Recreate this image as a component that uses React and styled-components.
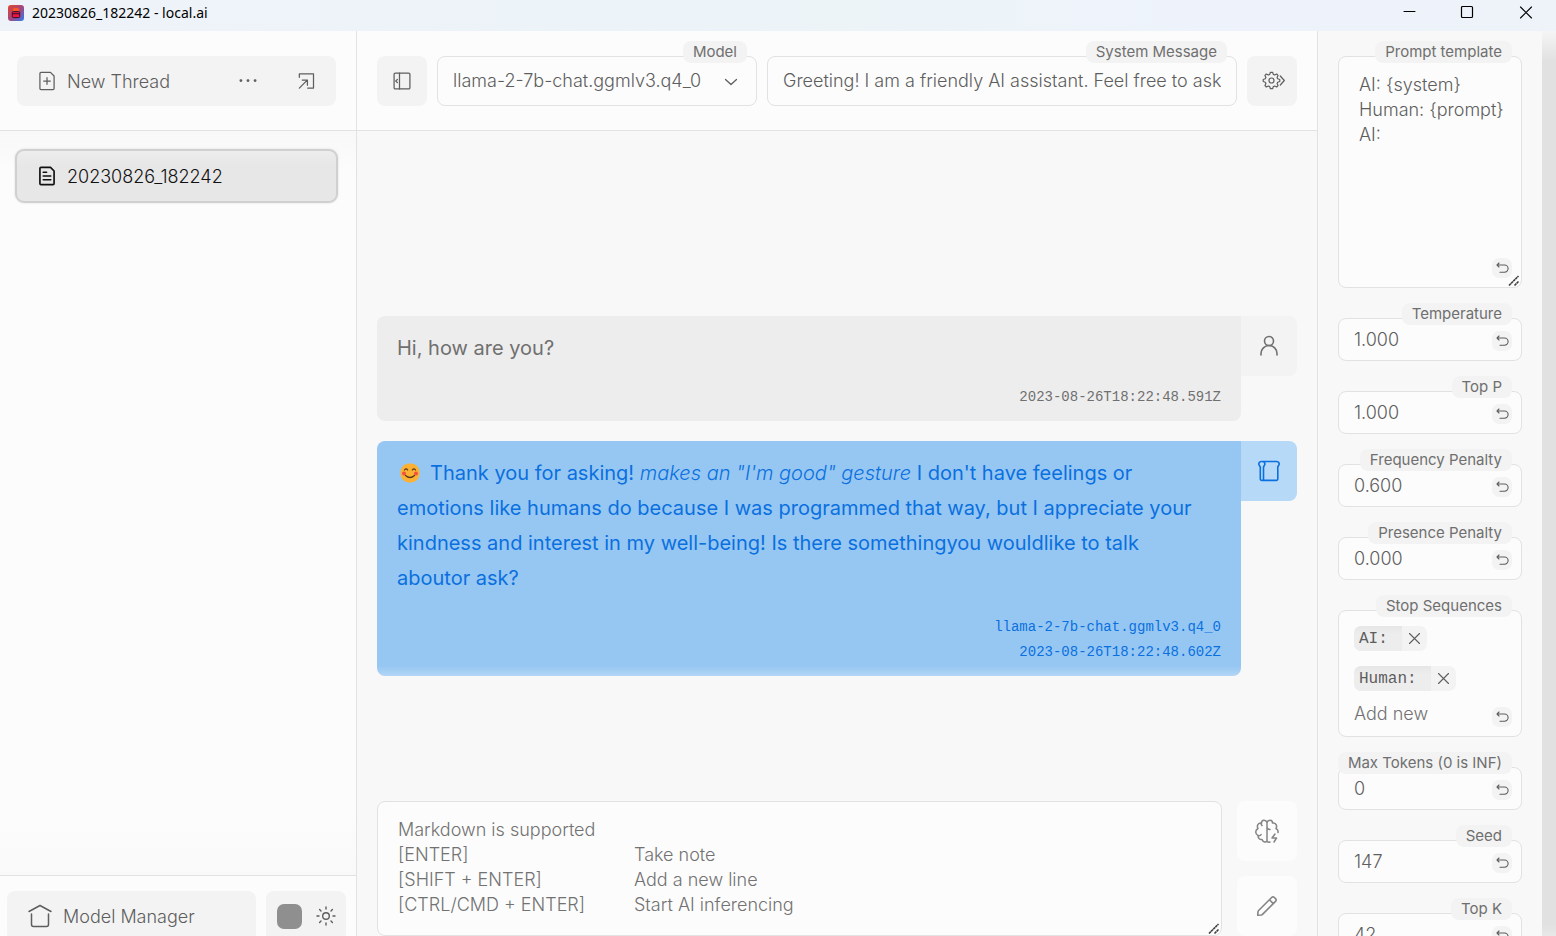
import React from "react";
import styled, { createGlobalStyle, css } from "styled-components";

const Global = createGlobalStyle`
  *, *::before, *::after { box-sizing: border-box; }
  html, body, #root { height: 100%; }
  body {
    margin: 0;
    overflow: hidden;
    font-family: Inter, "Liberation Sans", sans-serif;
    font-size: 18px;
    font-weight: 300;
    line-height: 25px;
    color: #5e5e5e;
    background: #f8f8f8;
  }
  button, input, textarea, select { font: inherit; color: inherit; margin: 0; }
  button { border: 0; padding: 0; cursor: pointer; }
`;

const line = "#e2e2e2";
const mono = `"Liberation Mono", monospace`;

const Window = styled.div`
  display: flex;
  flex-direction: column;
  height: 100vh;
`;

const TitleBar = styled.header`
  display: flex;
  align-items: center;
  flex: none;
  height: 31px;
  padding: 0 22px 6px 8px;
  gap: 8px;
  background: linear-gradient(90deg, #eef3fa, #ecf4f8 55%, #eef3fb 80%, #edf3f9);
  color: #000;
`;

const WindowTitle = styled.h1`
  flex: 1;
  margin: 0;
  font: 400 14px/20px "Noto Sans", "Open Sans", sans-serif;
`;

const WindowControls = styled.div`
  display: flex;
  gap: 42px;
`;

const WindowButton = styled.button`
  display: flex;
  width: 16px;
  height: 16px;
  background: none;
`;

const Body = styled.div`
  display: grid;
  grid-template-columns: 357px minmax(0, 1fr) 239px;
  flex: 1;
  min-height: 0;
`;

const Sidebar = styled.aside`
  display: flex;
  flex-direction: column;
  min-height: 0;
  border-right: 1px solid ${line};
  background: #fcfcfc;
`;

const SidebarHeader = styled.div`
  flex: none;
  height: 100px;
  padding: 25px 20px 0 17px;
  border-bottom: 1px solid ${line};
`;

const NewThreadBar = styled.div`
  display: flex;
  align-items: center;
  height: 50px;
  padding-right: 20px;
  border-radius: 8px;
  background: #f3f3f3;
`;

const ToolButton = styled.button`
  display: flex;
  align-items: center;
  justify-content: center;
  gap: 10px;
  height: 50px;
  background: none;
  ${(p) => p.$wide && css`
    flex: 1;
    justify-content: flex-start;
    padding-left: 20px;
  `}
`;

const BarActions = styled.div`
  display: flex;
  gap: 38px;
`;

const ThreadList = styled.nav`
  flex: 1;
  padding: 18px 18px 0 15px;
  background: linear-gradient(#f8f8f8, #fcfcfc 40px, #fcfcfc calc(100% - 60px), #f9f9f9);
`;

const ThreadLink = styled.a`
  display: flex;
  align-items: center;
  gap: 10px;
  height: 54px;
  padding-left: 20px;
  border: 2px solid #d0d0d0;
  border-radius: 9px;
  background: linear-gradient(#ededed, #e7e7e7 14px);
  box-shadow: 0 0 2px #d4d4d4;
  color: #111;
  text-decoration: none;
`;

const SidebarFooter = styled.div`
  display: flex;
  flex: none;
  gap: 10px;
  height: 61px;
  padding: 15px 10px 0 7px;
  border-top: 1px solid ${line};
`;

const FooterButton = styled.button`
  display: flex;
  align-items: center;
  gap: ${(p) => (p.$grow ? "10px" : "13px")};
  height: 50px;
  flex: ${(p) => (p.$grow ? "1" : "0 0 80px")};
  padding-left: ${(p) => (p.$grow ? "20px" : "11px")};
  border-radius: 8px;
  background: #f3f3f3;
`;

const Swatch = styled.span`
  width: 25px;
  height: 25px;
  border-radius: 7px;
  background: #8f8f8f;
`;

const Main = styled.main`
  display: flex;
  flex-direction: column;
  min-width: 0;
  min-height: 0;
`;

const Toolbar = styled.div`
  display: flex;
  flex: none;
  gap: 10px;
  height: 100px;
  padding: 25px 20px 0;
  border-bottom: 1px solid ${line};
  background: #fcfcfc;
`;

const SquareButton = styled.button`
  display: flex;
  align-items: center;
  justify-content: center;
  flex: 0 0 50px;
  height: 50px;
  border-radius: 8px;
  background: #f3f3f3;
`;

const Field = styled.div`
  position: relative;
  display: flex;
  min-width: 0;
  flex: ${(p) => p.$flex || "none"};
`;

const FieldLabel = styled.label`
  position: absolute;
  top: -15px;
  right: 10px;
  padding: 0 10px;
  border-radius: 8px;
  background: #f3f3f3;
  font-size: 15px;
  font-weight: 400;
  line-height: 22px;
  color: #6f6f6f;
  white-space: nowrap;
`;

const control = css`
  width: 100%;
  min-width: 0;
  border: 1px solid ${line};
  border-radius: 8px;
  outline: none;
  background: #fcfcfc;
  padding: 0 15px;
`;

const Select = styled.select`
  ${control}
  height: 50px;
  padding-bottom: 2px;
  appearance: none;
`;

const SelectArrow = styled.span`
  position: absolute;
  right: 18px;
  top: 18px;
  display: flex;
  pointer-events: none;
`;

const Input = styled.input`
  ${control}
  height: ${(p) => (p.$large ? "50px" : "43px")};
  padding-bottom: ${(p) => (p.$large ? "2px" : "0")};
`;

const TextArea = styled.textarea`
  ${control}
  display: block;
  height: 232px;
  padding: 15px 10px 15px 20px;
  resize: none;
`;

const Chat = styled.section`
  display: flex;
  flex-direction: column;
  justify-content: flex-end;
  flex: 1;
  gap: 20px;
  min-height: 0;
  padding: 0 20px 125px;
`;

const Message = styled.article`
  display: flex;
  align-items: flex-start;
  color: ${(p) => (p.$bot ? "#0a70df" : "#707070")};
`;

const Bubble = styled.div`
  display: flex;
  flex-direction: column;
  gap: 19px;
  flex: 1;
  min-width: 0;
  padding: 15px 20px 11px;
  border-radius: 8px 0 8px 8px;
  background: ${(p) => (p.$bot ? "linear-gradient(#96c7f2 calc(100% - 10px), #b3d6f6)" : "#ededed")};
`;

const MessageText = styled.p`
  margin: 0;
  padding-right: 15px;
  font-size: 20px;
  font-weight: 400;
  line-height: 35px;
  em { font-weight: 300; }
`;

const Meta = styled.footer`
  display: flex;
  flex-direction: column;
  align-items: flex-end;
  font: 14px/25px ${mono};
`;

const Avatar = styled.div`
  display: flex;
  align-items: center;
  justify-content: center;
  width: 56px;
  height: 60px;
  border-radius: 0 8px 8px 0;
  background: ${(p) => (p.$bot ? "#b7d9f8" : "#f3f3f3")};
`;

const Emoji = styled.svg`
  margin: 0 10px 0 3px;
  vertical-align: -3px;
`;

const Composer = styled.form`
  display: flex;
  flex: none;
  gap: 15px;
  padding: 0 20px;
`;

const Prompt = styled.div`
  position: relative;
  flex: 1;
  display: flex;
`;

const PromptInput = styled.textarea`
  ${control}
  height: 135px;
  resize: none;
`;

const PromptHints = styled.dl`
  position: absolute;
  inset: 16px 20px auto 21px;
  display: grid;
  grid-template-columns: 236px 1fr;
  margin: 0;
  color: #727272;
  pointer-events: none;
  dt, dd { margin: 0; }
  dt:first-child { grid-column: 1 / -1; }
`;

const ComposerActions = styled.div`
  display: flex;
  flex-direction: column;
  gap: 15px;
`;

const ComposerButton = styled.button`
  display: flex;
  align-items: center;
  justify-content: center;
  width: 60px;
  height: 60px;
  border-radius: 8px;
  background: #fcfcfc;
  color: #858585;
`;

const Settings = styled.aside`
  display: flex;
  min-height: 0;
  border-left: 1px solid ${line};
  background: #f8f8f8;
`;

const SettingsList = styled.div`
  display: flex;
  flex-direction: column;
  gap: 30px;
  flex: 1;
  min-width: 0;
  padding: 25px 20px;
  overflow: hidden;
`;

const ScrollTrack = styled.div`
  width: 14px;
  background: linear-gradient(#f5f5f5, #e1e1e1 30px, #e1e1e1 calc(100% - 12px), #e8e8e8);
`;

const ResetButton = styled.button`
  position: absolute;
  right: 10px;
  bottom: 10px;
  display: flex;
  align-items: center;
  justify-content: center;
  width: 20px;
  height: 20px;
  border-radius: 7px;
  background: #f3f3f3;
`;

const Grip = styled.svg`
  position: absolute;
  right: 2px;
  bottom: 1px;
  color: #404040;
  pointer-events: none;
`;

const StopBox = styled.div`
  ${control}
  display: flex;
  flex-direction: column;
  align-items: flex-start;
  gap: 15px;
  height: 127px;
  padding-top: 15px;
`;

const Tag = styled.span`
  display: flex;
  height: 25px;
  overflow: hidden;
  border-radius: 7px;
  background: #f3f3f3;
  font: 16px/27px ${mono};
`;

const TagText = styled.span`
  padding: 0 5px;
  background: linear-gradient(#e6e6e6, #ededed 8px);
  white-space: pre;
`;

const TagRemove = styled.button`
  display: flex;
  align-items: center;
  justify-content: center;
  width: 25px;
  background: none;
`;

const AddInput = styled.input`
  width: 120px;
  height: 25px;
  margin-top: -5px;
  padding: 0;
  border: 0;
  outline: none;
  background: none;
  &::placeholder { color: #727272; opacity: 1; }
`;

const Icon = ({ size = 20, box = 24, w = 1.5, children }) => (
  <svg width={size} height={size} viewBox={`0 0 ${box} ${box}`} fill="none" stroke="currentColor"
    strokeWidth={w} strokeLinecap="round" strokeLinejoin="round" aria-hidden="true">
    {children}
  </svg>
);

const page = "M3.5 21V3a1.300 1.300 0 0 1 1.300-1.300h11.400l4.300 4.300v15a1.300 1.300 0 0 1-1.300 1.300H4.800A1.300 1.300 0 0 1 3.500 21Z";

const ResizeGrip = () => (
  <Grip width="12" height="12" viewBox="0 0 12 12" stroke="currentColor" strokeWidth="1.6" aria-hidden="true">
    <path d="M1 10.500 10.500 1M6.500 10.500l4-4" strokeDasharray="2.600 0.400" />
  </Grip>
);

const Reset = ({ name }) => (
  <ResetButton type="button" aria-label={`Reset ${name}`}>
    <Icon size={14} box={14} w={1.1}>
      <path d="M2 4h7.500a3.600 3.600 0 0 1 0 7.200H5M4 2 2 4l2 2" />
    </Icon>
  </ResetButton>
);

const NumberSetting = ({ id, label, value }) => (
  <Field>
    <Input id={id} defaultValue={value} />
    <FieldLabel htmlFor={id}>{label}</FieldLabel>
    <Reset name={label} />
  </Field>
);

const StopTag = ({ text }) => (
  <Tag>
    <TagText>{text + " "}</TagText>
    <TagRemove type="button" aria-label={`Remove ${text}`}>
      <Icon size={13} box={13} w={1.1}><path d="m1.500 1.500 10 10m0-10-10 10" /></Icon>
    </TagRemove>
  </Tag>
);

const AppLogo = () => (
  <svg width="16" height="16" viewBox="0 0 16 16" aria-hidden="true">
    <defs>
      <linearGradient id="logo" x1="0" y1="0" x2="1" y2="1">
        <stop offset="0" stopColor="#e2472c" />
        <stop offset=".5" stopColor="#a8467c" />
        <stop offset="1" stopColor="#2d7bf5" />
      </linearGradient>
    </defs>
    <rect width="16" height="16" rx="3" fill="url(#logo)" />
    <path d="M5 6.500V4.500Q5 3 6.500 3h3Q11 3 11 4.500v2z" fill="#ff5a1e" />
    <rect x="4.300" y="6.600" width="7.400" height="6" rx="1" fill="#f3123f" stroke="#35102c" strokeWidth="1" />
    <path d="M4.300 8.700h7.400" stroke="#35102c" strokeWidth="1" />
  </svg>
);

const Smile = () => (
  <Emoji width="20" height="20" viewBox="0 0 20 20" role="img" aria-label="Smiling face">
    <rect x=".5" y=".5" width="19" height="19" rx="8.500" fill="#fcb132" />
    <circle cx="4" cy="10.500" r="2" fill="#f6503c" />
    <circle cx="16" cy="10.500" r="2" fill="#f6503c" />
    <path d="M4.500 7q1.600-2.400 3.200 0M12.300 7q1.600-2.400 3.200 0M5.500 12.500q4.500 4 9 0" fill="none" stroke="#5b3a1c"
      strokeWidth="1.200" strokeLinecap="round" />
  </Emoji>
);

export default function App() {
  return (
    <Window>
      <Global />
      <TitleBar>
        <AppLogo />
        <WindowTitle>20230826_182242 - local.ai</WindowTitle>
        <WindowControls>
          <WindowButton aria-label="Minimize">
            <Icon size={16} box={16} w={1}><path d="M2 6.500h11" /></Icon>
          </WindowButton>
          <WindowButton aria-label="Maximize">
            <Icon size={16} box={16} w={1.2}><rect x="1.500" y="1.500" width="11" height="11" rx="1" /></Icon>
          </WindowButton>
          <WindowButton aria-label="Close">
            <Icon size={16} box={16} w={1.1}><path d="m2.500 2 11 11m0-11-11 11" /></Icon>
          </WindowButton>
        </WindowControls>
      </TitleBar>

      <Body>
        <Sidebar>
          <SidebarHeader>
            <NewThreadBar>
              <ToolButton $wide>
                <Icon><path d={page} /><path d="M8 12h8M12 8v8" /></Icon>
                New Thread
              </ToolButton>
              <BarActions>
                <ToolButton aria-label="More">
                  <Icon><g fill="currentColor"><circle cx="3.500" cy="11.500" r="1" /><circle cx="12" cy="11.500" r="1" /><circle cx="20.500" cy="11.500" r="1" /></g></Icon>
                </ToolButton>
                <ToolButton aria-label="Open folder">
                  <Icon><path d="M4 7.500V3.500h17v17h-7M4 20.500l9.500-9.500M7.500 10.800h6.200V17" /></Icon>
                </ToolButton>
              </BarActions>
            </NewThreadBar>
          </SidebarHeader>
          <ThreadList aria-label="Threads">
            <ThreadLink href="#thread">
              <Icon w={2}><path d={page} /><path d="M7.500 7.500h4M7.500 12h9M7.500 16.500h9" /></Icon>
              20230826_182242
            </ThreadLink>
          </ThreadList>
          <SidebarFooter>
            <FooterButton $grow>
              <Icon size={26} box={26} w={1.5}>
                <path d="M2 8.500 13 2.500l11 6M4.500 11v10.500a2 2 0 0 0 2 2h13a2 2 0 0 0 2-2V11" />
              </Icon>
              Model Manager
            </FooterButton>
            <FooterButton aria-label="Theme">
              <Swatch />
              <Icon size={22} box={22} w={1.4}>
                <circle cx="11" cy="11" r="3.300" />
                <path d="M11 2v2M11 18v2M2 11h2M18 11h2M4.600 4.600 6 6M16 16l1.400 1.400M4.600 17.400 6 16M16 6l1.400-1.400" />
              </Icon>
            </FooterButton>
          </SidebarFooter>
        </Sidebar>

        <Main>
          <Toolbar>
            <SquareButton aria-label="Toggle sidebar">
              <Icon>
                <rect x="2.500" y="2.500" width="19" height="19" rx="1.500" />
                <path d="M9 2.500v19M6.500 10l-2 2 2 2" />
              </Icon>
            </SquareButton>
            <Field $flex="0 0 320px">
              <Select id="model" defaultValue="llama">
                <option value="llama">llama-2-7b-chat.ggmlv3.q4_0</option>
              </Select>
              <FieldLabel htmlFor="model">Model</FieldLabel>
              <SelectArrow><Icon size={16} box={16} w={1.3}><path d="m2.500 5.500 5.500 5 5.500-5" /></Icon></SelectArrow>
            </Field>
            <Field $flex="1">
              <Input id="system" $large defaultValue="Greeting! I am a friendly AI assistant. Feel free to ask" />
              <FieldLabel htmlFor="system">System Message</FieldLabel>
            </Field>
            <SquareButton aria-label="Settings">
              <Icon size={26} box={26} w={1.2}>
                <circle cx="12.500" cy="12.500" r="2.500" />
                <path d="m11.400 4.300-.7 2.100-1.400.6-2-1-1.300 1.400.9 2-.6 1.400-2.100.7v2l2.100.7.6 1.400-.9 2L7.300 19l2-1 1.400.6.7 2.100h2.200l.7-2.100 1.400-.6 2 1 1.300-1.400-.9-2 .6-1.400 2.100-.7v-2l-2.100-.7-.6-1.400.9-2L17.700 6l-2 1-1.400-.6-.7-2.100zM21.300 8l4 4.500-4 4.500" />
              </Icon>
            </SquareButton>
          </Toolbar>

          <Chat aria-label="Conversation">
            <Message>
              <Bubble>
                <MessageText>Hi, how are you?</MessageText>
                <Meta><time>2023-08-26T18:22:48.591Z</time></Meta>
              </Bubble>
              <Avatar>
                <Icon size={24} w={1.6}>
                  <circle cx="12" cy="7" r="4.500" />
                  <path d="M4 21v-1.500a8 8 0 0 1 16 0V21" />
                </Icon>
              </Avatar>
            </Message>
            <Message $bot>
              <Bubble $bot>
                <MessageText>
                  <Smile />Thank you for asking! <em>makes an "I'm good" gesture</em> I don't have feelings or
                  emotions like humans do because I was programmed that way, but I appreciate your
                  kindness and interest in my well-being! Is there somethingyou wouldlike to talk
                  aboutor ask?
                </MessageText>
                <Meta>
                  <span>llama-2-7b-chat.ggmlv3.q4_0</span>
                  <time>2023-08-26T18:22:48.602Z</time>
                </Meta>
              </Bubble>
              <Avatar $bot>
                <Icon size={24} w={1.6}>
                  <path d="M4.500 2.500h15a2.500 2.500 0 0 1 2 4.200l-.7 1V20a1.400 1.400 0 0 1-1.400 1.400H4.700A1.400 1.400 0 0 1 3.300 20V8l-.8-1.300a2.500 2.500 0 0 1 2-4.200ZM6.500 21.400V8l.7-1.300a2.500 2.500 0 0 0-2-4.200" />
                </Icon>
              </Avatar>
            </Message>
          </Chat>

          <Composer>
            <Prompt>
              <PromptInput aria-label="Message" />
              <PromptHints>
                <dt>Markdown is supported</dt>
                <dt>[ENTER]</dt><dd>Take note</dd>
                <dt>[SHIFT + ENTER]</dt><dd>Add a new line</dd>
                <dt>[CTRL/CMD + ENTER]</dt><dd>Start AI inferencing</dd>
              </PromptHints>
              <ResizeGrip />
            </Prompt>
            <ComposerActions>
              <ComposerButton type="button" aria-label="Start inference">
                <Icon size={26} box={26} w={1.5}>
                  <path d="M13 3.500v20M13 4.500C12 1.500 7.500 1.500 7.500 5 4 4.500 2.500 8 4 10.500c-3 1.500-3 5.500 0 7C4 20.500 6 22 8 21.500c1 3 4 3 5 1.500M13 4.500c1-3 5.500-3 5.500.5 3.500-.5 5 3 3.500 5.500 1.800 1 2.300 2.500 2 4M13 23c.8 1.200 2 1.500 3 1M4 17.500c1 .5 2.500.2 3-1M13 9c0 1.500 1.500 2.500 3 2.500M21 16l-3 4h4.500l-2.500 4M8 7.500c-.8-.5-.8-1.800-.5-2.500" />
                </Icon>
              </ComposerButton>
              <ComposerButton type="button" aria-label="Take note">
                <Icon size={24} w={1.6}>
                  <path d="M14.400 5.700 3.600 16.500a2 2 0 0 0-.6 1.200L2.700 21.300l3.600-.3a2 2 0 0 0 1.200-.6L18.300 9.600M14.400 5.700l2.200-2.200a2 2 0 0 1 2.800 0l1.100 1.100a2 2 0 0 1 0 2.800l-2.200 2.200M14.400 5.700l3.900 3.900" />
                </Icon>
              </ComposerButton>
            </ComposerActions>
          </Composer>
        </Main>

        <Settings aria-label="Inference settings">
          <SettingsList>
            <Field>
              <TextArea id="template" defaultValue={"AI: {system}\nHuman: {prompt}\nAI:"} />
              <FieldLabel htmlFor="template">Prompt template</FieldLabel>
              <Reset name="Prompt template" />
              <ResizeGrip />
            </Field>
            <NumberSetting id="temperature" label="Temperature" value="1.000" />
            <NumberSetting id="top-p" label="Top P" value="1.000" />
            <NumberSetting id="frequency" label="Frequency Penalty" value="0.600" />
            <NumberSetting id="presence" label="Presence Penalty" value="0.000" />
            <Field>
              <StopBox>
                <StopTag text="AI:" />
                <StopTag text="Human:" />
                <AddInput id="stop" placeholder="Add new" />
              </StopBox>
              <FieldLabel htmlFor="stop">Stop Sequences</FieldLabel>
              <Reset name="Stop Sequences" />
            </Field>
            <NumberSetting id="max-tokens" label="Max Tokens (0 is INF)" value="0" />
            <NumberSetting id="seed" label="Seed" value="147" />
            <NumberSetting id="top-k" label="Top K" value="42" />
          </SettingsList>
          <ScrollTrack />
        </Settings>
      </Body>
    </Window>
  );
}
